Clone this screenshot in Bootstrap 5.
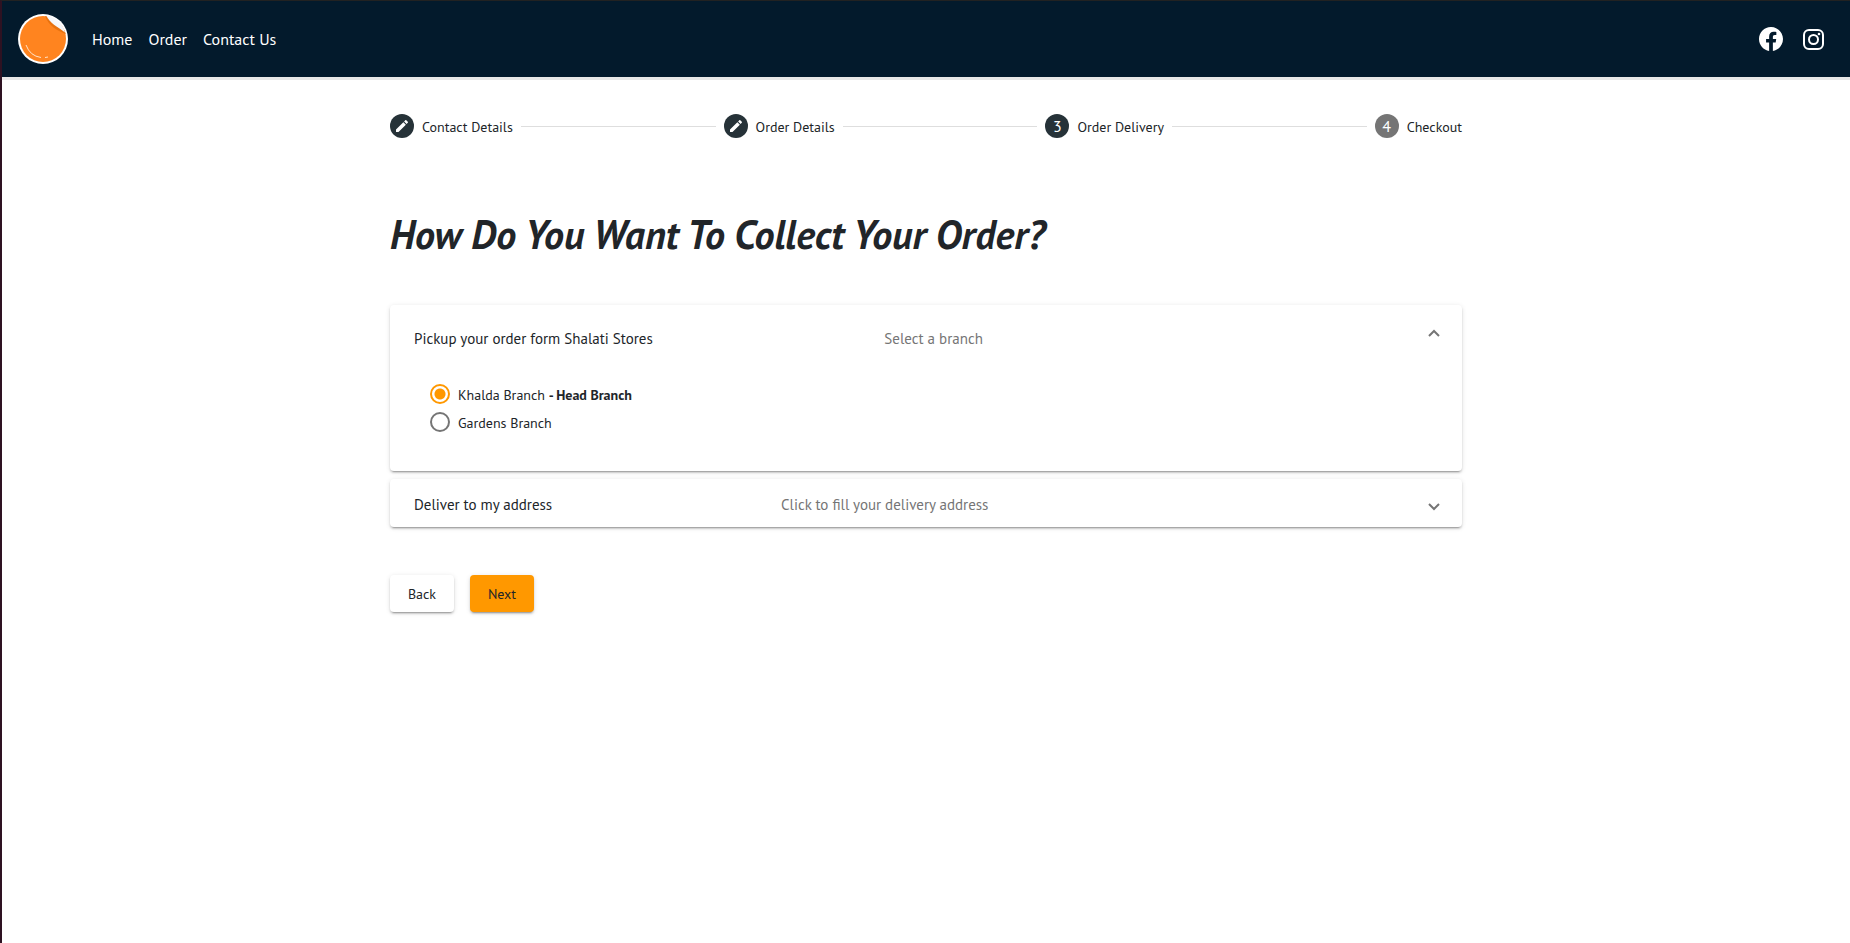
<!DOCTYPE html>
<html lang="en">
<head>
<meta charset="utf-8">
<meta name="viewport" content="width=device-width, initial-scale=1">
<title>Order Delivery</title>
<link href="https://cdn.jsdelivr.net/npm/bootstrap@5.3.0/dist/css/bootstrap.min.css" rel="stylesheet">
<style>
body{font-family:"PT Sans",Lato,sans-serif;font-size:14px;line-height:20px;color:#212529;min-height:100vh;border-left:2px solid #2e1222;border-top:1px solid #222;background:#fff}
.site-bar{background:#031a2c;height:76px;padding:0 25px 0 16px;box-shadow:0 3px 0 #e8e8e8}
.site-bar .nav-link{color:#fff;font-size:16px;line-height:24px;padding:0}
.site-bar .social{gap:19px}
.brand-mark{margin-right:24px}
.page{max-width:1120px;padding:37px 24px}
.step-dot{width:24px;height:24px;border-radius:50%;background:#263238;color:#fff;font-size:16px;flex:none}
.step-dot.todo{background:#757575}
.step-name{font-size:14px;white-space:nowrap;padding-top:2px}
.step-line{height:1px;background:#dedede}
.title{font-size:40px;line-height:48px;font-weight:700;font-style:italic;margin:72px 0 47px}
.panel{border-radius:4px;background:#fff;box-shadow:0 3px 1px -2px rgba(0,0,0,.2),0 2px 2px rgba(0,0,0,.14),0 1px 5px rgba(0,0,0,.12)}
.panel-head{width:100%;height:48px;padding:0 22px 0 24px;border:0;background:none;text-align:left;font-size:15px;color:#212529}
.panel-head.open{height:64px}
.panel-head .name{flex:1 1 auto;margin-right:16px;padding-top:3px}
.panel-head .hint{flex:2 1 auto;margin-right:14px;padding-top:3px;color:#757575}
.chevron{padding-top:8px;display:flex}
.open .chevron{padding:0 0 8px}
.branches{padding:11px 40px 35px}
.branches label{font-size:14px;padding-top:2px}
.branches .pick{height:28px}
.branches .form-check-input{width:20px;height:20px;margin:0;border:2px solid #757575;background:#fff;box-shadow:none}
.branches .form-check-input:checked{border-color:#ff9800;background:radial-gradient(circle,#ff9800 0 5px,#fff 6px)}
.act{width:64px;height:37px;padding:1px 0 0;border:0;border-radius:4px;font-size:14px;color:#212529;background:#fff;box-shadow:0 3px 1px -2px rgba(0,0,0,.2),0 2px 2px rgba(0,0,0,.14),0 1px 5px rgba(0,0,0,.12)}
.act.go{background:#ff9800}
</style>
</head>
<body>
<nav class="site-bar d-flex align-items-center">
  <a class="brand-mark d-flex" href="#" aria-label="Home page">
    <svg width="50" height="50" viewBox="0 0 50 50">
      <defs><linearGradient id="fold" x1="0" y1="1" x2="1" y2="0"><stop offset="0" stop-color="#c9ccd6"/><stop offset=".4" stop-color="#f4f5f9"/><stop offset="1" stop-color="#fff"/></linearGradient></defs>
      <circle cx="25" cy="25" r="25" fill="#fff"/>
      <circle cx="25" cy="25" r="23" fill="#ff841f"/>
      <path d="M27 2C31 12 38 16 48 20L46 16 31 3Z" fill="#e8720f"/>
      <path d="M28 1C32 10 39 12 47 18.500C45 10 38 3 28 1Z" fill="url(#fold)"/>
      <path d="M8 31Q12 42 23 43.500M27 43.500L30 43" fill="none" stroke="#ffe3c8" stroke-width="1"/>
    </svg>
  </a>
  <div class="d-flex gap-3">
    <a class="nav-link" href="#">Home</a>
    <a class="nav-link" href="#">Order</a>
    <a class="nav-link" href="#">Contact Us</a>
  </div>
  <div class="social d-flex align-items-center ms-auto">
    <a class="d-flex" href="#" aria-label="Facebook"><svg width="24" height="24" viewBox="0 0 16 16" fill="#fff"><path d="M16 8.049c0-4.446-3.582-8.050-8-8.050C3.580 0-.002 3.603-.002 8.050c0 4.017 2.926 7.347 6.750 7.951v-5.625h-2.030V8.050H6.750V6.275c0-2.017 1.195-3.131 3.022-3.131.876 0 1.791.157 1.791.157v1.980h-1.009c-.993 0-1.303.621-1.303 1.258v1.510h2.218l-.354 2.326H9.250V16c3.824-.604 6.750-3.934 6.750-7.951z"/></svg></a>
    <a class="d-flex" href="#" aria-label="Instagram"><svg width="23" height="23" viewBox="0 0 23 23" fill="none" stroke="#fff" stroke-width="2"><rect x="2" y="2" width="19" height="19" rx="5"/><circle cx="11.500" cy="11.500" r="4.500"/><circle cx="17" cy="6" r="1.300" fill="#fff" stroke="none"/></svg></a>
  </div>
</nav>
<main class="page container-fluid">
  <div class="d-flex align-items-center gap-2">
    <span class="step-dot d-flex align-items-center justify-content-center"><svg width="16" height="16" viewBox="0 0 24 24" fill="#fff"><path d="M3 17.250V21h3.750L17.810 9.940l-3.750-3.750L3 17.250zM20.710 7.040c.390-.390.390-1.020 0-1.410l-2.340-2.340c-.390-.390-1.020-.390-1.410 0l-1.830 1.830 3.750 3.750 1.830-1.830z"/></svg></span>
    <span class="step-name">Contact Details</span>
    <span class="step-line flex-fill"></span>
    <span class="step-dot d-flex align-items-center justify-content-center"><svg width="16" height="16" viewBox="0 0 24 24" fill="#fff"><path d="M3 17.250V21h3.750L17.810 9.940l-3.750-3.750L3 17.250zM20.710 7.040c.390-.390.390-1.020 0-1.410l-2.340-2.340c-.390-.390-1.020-.390-1.410 0l-1.830 1.830 3.750 3.750 1.830-1.830z"/></svg></span>
    <span class="step-name">Order Details</span>
    <span class="step-line flex-fill"></span>
    <span class="step-dot d-flex align-items-center justify-content-center">3</span>
    <span class="step-name">Order Delivery</span>
    <span class="step-line flex-fill"></span>
    <span class="step-dot todo d-flex align-items-center justify-content-center">4</span>
    <span class="step-name">Checkout</span>
  </div>
  <h1 class="title">How Do You Want To Collect Your Order?</h1>
  <section class="panel mb-2">
    <button class="panel-head open d-flex align-items-center" type="button" aria-expanded="true">
      <span class="name">Pickup your order form Shalati Stores</span>
      <span class="hint">Select a branch</span>
      <span class="chevron"><svg width="12" height="8" viewBox="0 0 12 8" fill="none" stroke="#757575" stroke-width="2"><path d="M1 7L6 2L11 7"/></svg></span>
    </button>
    <div class="branches">
      <div class="pick d-flex align-items-center gap-2"><input class="form-check-input" type="radio" name="branch" id="khalda" checked><label for="khalda">Khalda Branch <b>- Head Branch</b></label></div>
      <div class="pick d-flex align-items-center gap-2"><input class="form-check-input" type="radio" name="branch" id="gardens"><label for="gardens">Gardens Branch</label></div>
    </div>
  </section>
  <section class="panel">
    <button class="panel-head d-flex align-items-center" type="button" aria-expanded="false">
      <span class="name">Deliver to my address</span>
      <span class="hint">Click to fill your delivery address</span>
      <span class="chevron"><svg width="12" height="8" viewBox="0 0 12 8" fill="none" stroke="#757575" stroke-width="2"><path d="M1 1L6 6L11 1"/></svg></span>
    </button>
  </section>
  <div class="d-flex gap-3 mt-5">
    <button class="act" type="button">Back</button>
    <button class="act go" type="button">Next</button>
  </div>
</main>
<script src="https://cdn.jsdelivr.net/npm/bootstrap@5.3.0/dist/js/bootstrap.bundle.min.js"></script>
</body>
</html>
